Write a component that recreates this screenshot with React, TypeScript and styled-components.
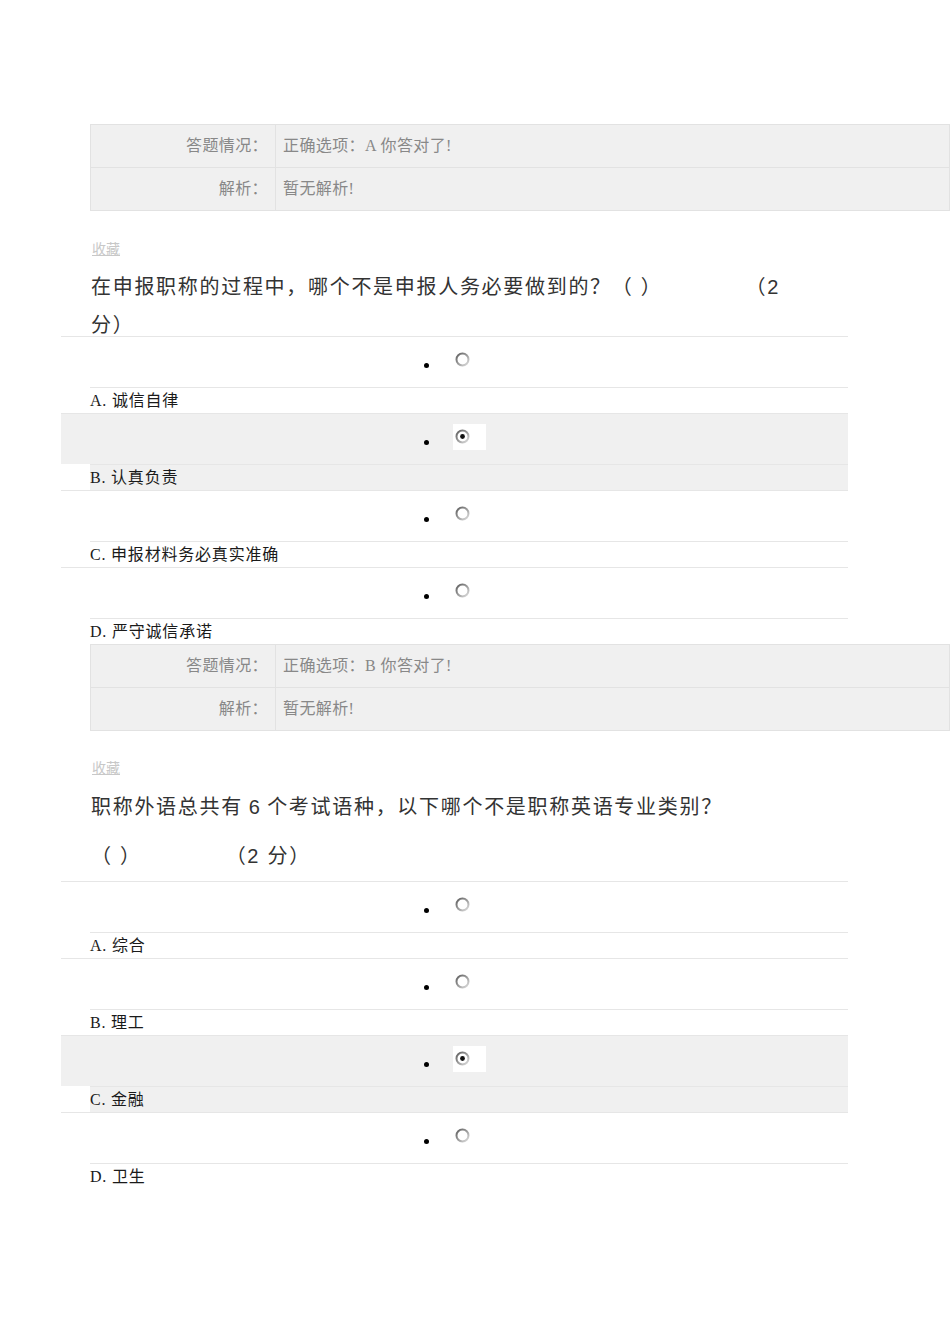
import styled, { createGlobalStyle } from "styled-components";

const GlobalStyle = createGlobalStyle`
  body {
    margin: 0;
    background: #ffffff;
    font-family: "Liberation Serif", "Noto Sans CJK SC", serif;
  }
`;

const Page = styled.div`
  width: 950px;
  padding-top: 124px;
  padding-bottom: 140px;
`;

const AnswerTable = styled.div`
  display: grid;
  grid-template-columns: 184px 1fr;
  width: 860px;
  margin-left: 90px;
  box-sizing: border-box;
  border: 1px solid #e2e2e2;
  background: #f0f0f0;
  font-size: 16px;
  letter-spacing: 0.4px;
  color: #888;
`;
const TableCell = styled.div<{ $label?: boolean; $last?: boolean }>`
  height: 42px;
  line-height: 42px;
  text-align: ${p => (p.$label ? "right" : "left")};
  padding: ${p => (p.$label ? "0 7px 0 0" : "0 0 0 7px")};
  border-left: ${p => (p.$label ? "none" : "1px solid #e2e2e2")};
  border-bottom: ${p => (p.$last ? "none" : "1px solid #e2e2e2")};
`;

const Collect = styled.a<{ $top: number }>`
  display: block;
  margin: ${p => p.$top}px 0 0 92px;
  width: fit-content;
  font-size: 14px;
  line-height: 20px;
  color: #c8c8c8;
  text-decoration: underline;
`;

const Title = styled.div<{ $top: number; $lh: number }>`
  margin: ${p => p.$top}px 0 0 91px;
  width: 720px;
  font-family: "Liberation Sans", "Noto Sans CJK SC", sans-serif;
  font-size: 20px;
  letter-spacing: 1.7px;
  line-height: ${p => p.$lh}px;
  color: #333;
`;
const Gap = styled.span<{ $w: number }>`
  display: inline-block;
  width: ${p => p.$w}px;
`;

const Options = styled.ul<{ $top: number }>`
  list-style: none;
  margin: ${p => p.$top}px 0 0 61px;
  padding: 0;
  width: 787px;
`;
const Option = styled.li`
  display: flex;
  flex-direction: column;
`;
const ChoiceRow = styled.div<{ $checked?: boolean }>`
  display: flex;
  align-items: flex-start;
  height: 50px;
  padding-left: 363px;
  border-top: 1px solid #e6e6e6;
  background: ${p => (p.$checked ? "#f0f0f0" : "#ffffff")};
`;
const Bullet = styled.span`
  width: 5px;
  height: 5px;
  margin-top: 26px;
  border-radius: 50%;
  background: #000;
`;
const RadioBox = styled.span<{ $checked?: boolean }>`
  display: flex;
  margin: 10px 0 0 24px;
  padding: 5px 16px 6px 2px;
  background: ${p => (p.$checked ? "#ffffff" : "transparent")};
`;
const Label = styled.div<{ $checked?: boolean }>`
  margin-left: 29px;
  height: 25px;
  line-height: 25px;
  border-top: 1px solid #e6e6e6;
  background: ${p => (p.$checked ? "#f0f0f0" : "#ffffff")};
  font-size: 16px;
  letter-spacing: 0.8px;
  color: #1a1a1a;
`;

function Radio({ checked }: { checked?: boolean }) {
  return (
    <svg width="15" height="15" viewBox="0 0 15 15">
      <defs>
        <linearGradient id="rg" x1="0" y1="0" x2="1" y2="1">
          <stop offset="0" stopColor="#5e5e5e" />
          <stop offset="0.6" stopColor="#a8a8a8" />
          <stop offset="1" stopColor="#e2e2e2" />
        </linearGradient>
      </defs>
      <circle cx="7.5" cy="7.5" r="6" fill="#fff" stroke="url(#rg)" strokeWidth="2" />
      {checked && <circle cx="7.5" cy="7.5" r="2.4" fill="#111" />}
    </svg>
  );
}

function Result({ correct }: { correct: string }) {
  return (
    <AnswerTable>
      <TableCell $label>答题情况：</TableCell>
      <TableCell>正确选项：{correct} 你答对了!</TableCell>
      <TableCell $label $last>解析：</TableCell>
      <TableCell $last>暂无解析!</TableCell>
    </AnswerTable>
  );
}

function OptionList({ items, checked, top }: { items: string[]; checked: number; top: number }) {
  return (
    <Options $top={top}>
      {items.map((item, i) => (
        <Option key={item}>
          <ChoiceRow $checked={i === checked}>
            <Bullet />
            <RadioBox $checked={i === checked}>
              <Radio checked={i === checked} />
            </RadioBox>
          </ChoiceRow>
          <Label $checked={i === checked}>{item}</Label>
        </Option>
      ))}
    </Options>
  );
}

export default function App() {
  return (
    <Page>
      <GlobalStyle />
      <Result correct="A" />

      <Collect $top={29}>收藏</Collect>
      <Title $top={8} $lh={38}>
        在申报职称的过程中，哪个不是申报人务必要做到的？（ ）<Gap $w={83} />（2
        <br />
        分）
      </Title>
      <OptionList
        top={-8}
        checked={1}
        items={["A. 诚信自律", "B. 认真负责", "C. 申报材料务必真实准确", "D. 严守诚信承诺"]}
      />
      <Result correct="B" />

      <Collect $top={28}>收藏</Collect>
      <Title $top={4} $lh={49}>
        职称外语总共有{"\u2009"}6{"\u2009"}个考试语种，以下哪个不是职称英语专业类别？
        <br />
        （ ）<Gap $w={84} />（2 分）
      </Title>
      <OptionList top={0} checked={2} items={["A. 综合", "B. 理工", "C. 金融", "D. 卫生"]} />
    </Page>
  );
}
